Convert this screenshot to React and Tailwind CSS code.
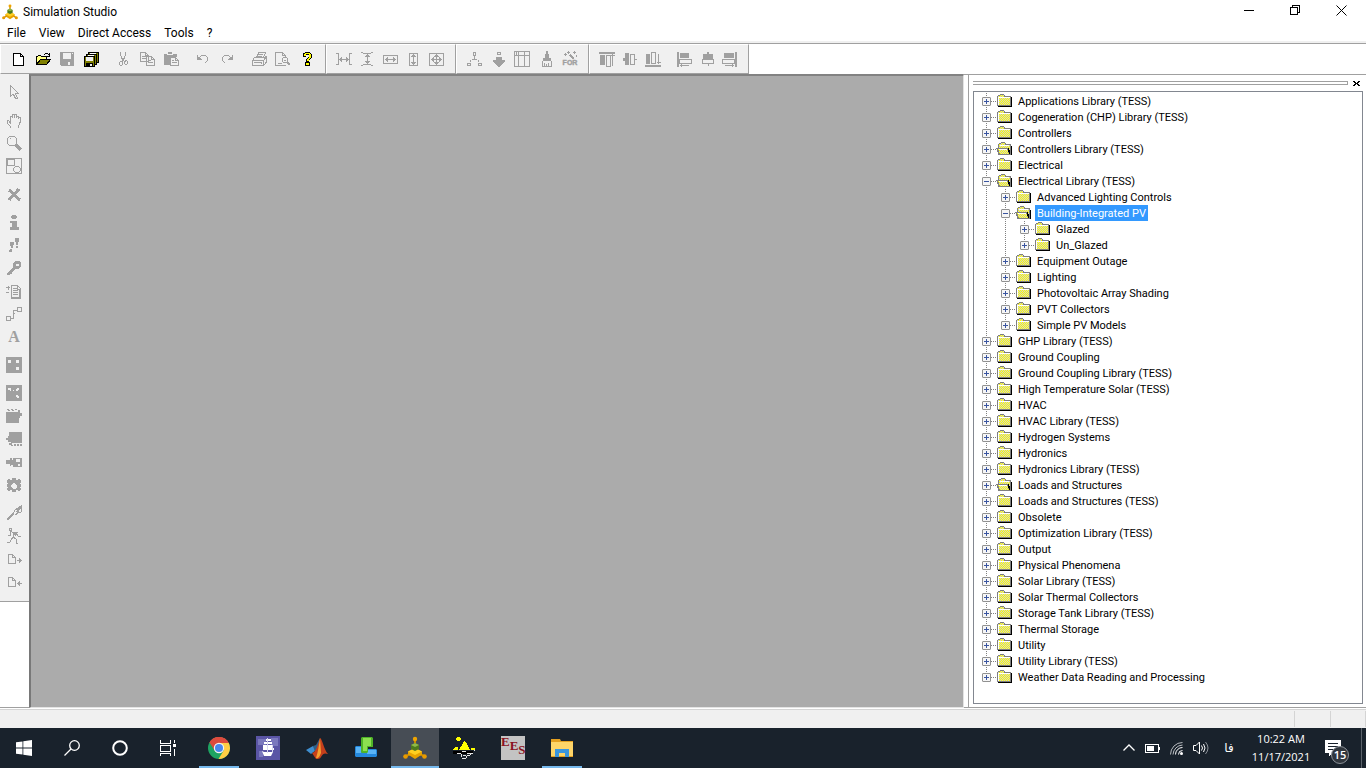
import React, { useState } from 'react';
import clsx from 'clsx';

// 16x16 pixel drawings, stroked in the current colour
const ICONS = {
  new: (
    <path d="M2.5 2.5h7l3 3v9h-10zM9.5 2.5v3h3" fill="#fff" stroke="#000" />
  ),
  open: (
    <>
      <path d="M1.5 13.5v-8h1l1-1h2l1 1h5v3" fill="#ffff80" stroke="#000" />
      <path d="M1.5 13.5l4-5h10l-4 5z" fill="#808000" stroke="#000" />
      <path d="M9 3.5h1M10 2.5h3M13 3.5h1M14.5 2v4M12 5.5h3" stroke="#000" />
    </>
  ),
  save: (
    <>
      <path d="M1 1h14v14H2l-1-1z" fill="currentColor" stroke="none" />
      <path d="M4 2h8v6H4zM9 11h2v3H9zM13 2h1v1h-1z" fill="#f0f0f0" stroke="none" />
    </>
  ),
  saveAll: (
    <>
      <path d="M5.5 1.5h10v10h-10z" fill="#808000" stroke="#000" />
      <path d="M7 2h6v3H7z" fill="#fff" stroke="none" />
      <path d="M3.5 3.5h10v10h-10z" fill="#808000" stroke="#000" />
      <path d="M5 4h6v3H5z" fill="#fff" stroke="none" />
      <path d="M1.5 5.5h10v10h-10z" fill="#808000" stroke="#000" />
      <path d="M3 6h7v4H3z" fill="#f0f0f0" stroke="none" />
      <path d="M3 12h7v4H3z" fill="#000" stroke="none" />
      <path d="M7 13h2v2H7z" fill="#f0f0f0" stroke="none" />
    </>
  ),
  cut: (
    <path d="M5.5 1v4M6.5 5v3M10.5 1v4M9.5 5v3M7.5 7v3M8.5 7v3M6 10.5h1M9 10.5h2M5 10.5h2M4.5 11v3M5 14.5h2M7.5 10v4M9.5 10v3M10 9.5h2M12.5 10v3M10 13.5h2" />
  ),
  copy: (
    <path d="M1.5 1.5h5l3 3v6h-8zM6.5 1.5v3h3M3 5.5h4M3 7.5h4M7.5 5.5h5l3 3v6h-8zM12.5 5.5v3h3M9 9.5h3M9 11.5h5" fill="#f0f0f0" />
  ),
  paste: (
    <>
      <path d="M1 3h4V1h4v2h5v3H7v8H1z" fill="currentColor" stroke="none" />
      <path d="M4 3h6v1H4z" fill="#f0f0f0" stroke="none" />
      <path d="M7.5 6.5h5l3 3v5h-8zM12.5 6.5v3h3M9 9.5h2M9 11.5h5" fill="#f0f0f0" />
    </>
  ),
  undo: <path d="M2.5 4v5M2 8.5h5M3 7.5h3M3 6.5h2M5 5.5h1M6 4.5h5M11 5.5h1M12.5 6v4M11.5 10v1M10 11.5h1" />,
  redo: <path d="M13.5 4v5M9 8.5h5M10 7.5h3M11 6.5h2M10 5.5h1M5 4.5h5M4 5.5h1M3.5 6v4M4.5 10v1M5 11.5h1" />,
  print: (
    <path d="M5.5 6.5l2-5h7l-2 5M7 3.5h5M6 5.5h5M3.5 6.5h10l2-1v6l-3 3h-11v-5zM1.5 9.5h11M12.5 9.5v5M12.5 9.5l3-4M3 11.5h8M10 12.5h1M13.5 11.5h2" />
  ),
  preview: (
    <>
      <path d="M10.5 14.5h-10v-13h7l3 3v2M7.5 1.5v3h3M3 12.5h4" />
      <path d="M8.5 6.5h3l1 1v3l-1 1h-3l-1-1v-3zM9 9.5h2" />
      <path d="M12 11l3 3" strokeWidth="2" />
    </>
  ),
  help: (
    <>
      <path d="M4 2h2V1h5v1h1v1h1v4h-1v1h-1v1h-1v2H7V8h1V7h1V6h1V4H7v2H4zM6 11h5v4H6z" fill="#000" stroke="none" />
      <path d="M5 3h1V2h5v1h1v4h-1v1h-1v2H8V8h1V7h1V3H7v2H5zM7 12h3v2H7z" fill="#ff0" stroke="none" />
    </>
  ),
  spaceH: <path d="M0 2.5h2M2.5 2v12M0 13.5h2M16 2.5h-2M13.5 2v12M16 13.5h-2M3 8.5h10M5.5 6v5M4.5 7v3M10.5 6v5M11.5 7v3" />,
  spaceV: <path d="M2 1.5h2M4 2.5h8M12 1.5h2M2 14.5h2M4 13.5h8M12 14.5h2M8.5 3v10M6 5.5h5M7 4.5h3M6 10.5h5M7 11.5h3" />,
  sizeH: <path d="M1.5 4.5h14v8h-14zM3 8.5h11M5.5 6v5M4.5 7v3M11.5 6v5M12.5 7v3" />,
  sizeV: <path d="M4.5 2.5h8v12h-8zM8.5 3v11M6 5.5h5M7 4.5h3M6 11.5h5M7 12.5h3" />,
  sizeBoth: <path d="M1.5 2.5h14v12h-14zM3 8.5h11M8.5 3v11M5.5 6v5M4.5 7v3M11.5 6v5M12.5 7v3M6 5.5h5M7 4.5h3M6 11.5h5M7 12.5h3" />,
  tree: <path d="M7.5 1.5h2v3h-2zM8.5 5v3M6 8.5h5M4.5 9v2M12.5 9v2M1.5 12.5h3v2h-3zM12.5 12.5h3v2h-3z" />,
  down: (
    <>
      <path d="M7.5 1.5h3v2h-3z" />
      <path d="M6 6h6v3h3v2l-6 5-6-5V9h3z" fill="currentColor" stroke="none" />
    </>
  ),
  grid: <path d="M.5.5h15v15H.5zM4.5 0v16M0 4.5h16M10.5 0v16M2.5 0v4" />,
  brush: (
    <>
      <path d="M8 0h2v3h1v4h2v3H5V7h2V3h1z" fill="currentColor" stroke="none" />
      <path d="M4.5 10v5.5h9V10M6.5 12v3M8.5 13v2M10.5 12v3" />
    </>
  ),
  fortran: (
    <>
      <path d="M3.5 2v3M2 3.5h3M6.5 0v3M5 1.5h3M12.5 0v3M11 1.5h3M14.5 4v2" />
      <path d="M8 4l4 4" strokeWidth="2" />
      <text
        x="8"
        y="14"
        textAnchor="middle"
        className="font-['Liberation_Sans',sans-serif] text-[7px] font-bold"
        fill="currentColor"
        stroke="currentColor"
        strokeWidth=".4"
      >
        FOR
      </text>
    </>
  ),
  alignTop: (
    <>
      <path d="M0 1h16v2H0zM1 4h5v10H1z" fill="currentColor" stroke="none" />
      <path d="M7.5 4.5h4v11h-4zM13.5 3v12M12 4.5h4" />
    </>
  ),
  alignMid: (
    <>
      <path d="M3 2h4v12H3zM1 7h3v3H1z" fill="currentColor" stroke="none" />
      <path d="M8.5 3.5h4v10h-4zM12 8.5h3" />
    </>
  ),
  alignBottom: (
    <>
      <path d="M1 3h4v10H1zM0 14h16v2H0z" fill="currentColor" stroke="none" />
      <path d="M6.5 1.5h4v11h-4zM13.5 3v10M12 11.5h4" />
    </>
  ),
  alignLeft: (
    <>
      <path d="M1 1h2v15H1zM4 2h9v5H4z" fill="currentColor" stroke="none" />
      <path d="M3.5 8.5h12v4h-12zM4 14.5h9M5.5 13v3" />
    </>
  ),
  alignCenter: (
    <>
      <path d="M8 1h2v2h4v5H4V3h4z" fill="currentColor" stroke="none" />
      <path d="M3.5 8.5h11v4h-11zM9 13v2" />
    </>
  ),
  alignRight: (
    <>
      <path d="M13 1h2v15h-2zM2 2h10v5H2z" fill="currentColor" stroke="none" />
      <path d="M.5 8.5h12v4H.5zM3 14.5h9M10.5 13v3" />
    </>
  ),
  pointer: <path d="M4.5 1.5v11l2-2h1l2 4h2l-2-5h3z" />,
  hand: <path d="M5 15.5l-4-5v-2h1.5l1.5 2v-5l1-1 1.5 1v-3h2v3-3.5h2v4-2h2v3-1.5h1.5v5l-2 5" />,
  zoom: (
    <>
      <path d="M3.5 1.5h5l2 2v5l-2 2h-5l-2-2v-5zM3.5 4.5l1-1" />
      <path d="M10 10l5 5" strokeWidth="3" />
    </>
  ),
  zone: <path d="M.5.5h15v15H.5zM1.5 1.5h7v6h-7zM9.5 8.5h3l2 2v2l-2 2h-3l-2-2v-2z" />,
  del: <path d="M3 4l11 10M13 3L3 14" strokeWidth="3" />,
  info: <path d="M6 1h4v1h1v2h-1v1H6V4H5V2h1zM4 7h7v6h2v3H4v-3h2V9H4z" fill="currentColor" stroke="none" />,
  steps: (
    <path d="M4 5h4v3H7v3H5V9H4zM4 12h2v3H3v-2zM9 1h4v4h-1v3h-2V5H9zM10 9h2v2h-2z" fill="currentColor" stroke="none" />
  ),
  key: (
    <>
      <path d="M9 1h5v1h1v5h-1v1h-1v1H9L3 15H1v-2l6-6V3h1V2h1zM10 4v2h3V4z" fill="currentColor" fillRule="evenodd" stroke="none" />
      <path d="M4 12l2 2" strokeWidth="2" />
    </>
  ),
  notes: (
    <>
      <path d="M2.5 3v4M0 4.5h4M0 9.5h3M5.5 2.5h6l3 3v9h-9zM7 5.5h4M7 7.5h5M7 9.5h5M7 11.5h5M11.5 3v3h3" />
      <path d="M14 6v9H5" strokeWidth="2" />
    </>
  ),
  link: <path d="M11.5 1.5h4v4h-4zM.5 10.5h4v4h-4zM5 12.5h2.5v-8H11M6.5 7.5h2" />,
  text: (
    <text
      x="8"
      y="13"
      textAnchor="middle"
      className="font-['Liberation_Serif',serif] text-[16px] font-bold"
      fill="currentColor"
      stroke="none"
    >
      A
    </text>
  ),
  block4: (
    <>
      <path d="M0 0h16v16H0z" fill="currentColor" stroke="none" />
      <path d="M2 3h3v3H2zM10 3h3v3h-3zM10 10h3v3h-3z" fill="#f0f0f0" stroke="none" />
    </>
  ),
  block3: (
    <>
      <path d="M0 0h16v16H0z" fill="currentColor" stroke="none" />
      <path d="M2 3h3v3H4V5H2zM7 5h1v1H7zM10 4h1V3h2v2h-1v1h-2zM10 10h2v1h1v2h-2v-1h-1z" fill="#f0f0f0" stroke="none" />
    </>
  ),
  front: (
    <path d="M1 1h2v1H1zM5 1h2v1H5zM9 1h2v1H9zM12 2h2v3h2v3h-2v2h-1v5H0V4h12zM2 2h2v1H2zM6 2h2v1H6z" fill="currentColor" stroke="none" />
  ),
  back: (
    <path d="M3 1h13v11H5v-1H2V9H0V7h2V5h1zM3 12h3v2H3zM8 13h2v2H8zM11 13h2v2h-2zM14 13h2v2h-2zM5 14h2v1H5z" fill="currentColor" stroke="none" />
  ),
  toDisk: (
    <>
      <path d="M0 6h4V4h2v2h1V4h9v9H7v-2H5v1H4v-2H0z" fill="currentColor" stroke="none" />
      <path d="M10 5h4v3h-4zM12 10h2v2h-2z" fill="#f0f0f0" stroke="none" />
    </>
  ),
  gear: (
    <path d="M6 1h4v2h2V2h2v1h1v3h-1v1h1v3h-1v1h1v2h-1v1h-2v-1h-2v2H6v-2H4v1H2v-1H1v-2h1v-1H1V7h1V6H1V3h1V2h2v1h2zM7 6v1H6v1H5v2h1v1h1v1h3v-1h1V8h-1V7H9V6z" fill="currentColor" fillRule="evenodd" stroke="none" />
  ),
  pen: (
    <>
      <path d="M1 15l6-6" strokeWidth="2" />
      <path d="M7 9l2-4 6-4v6l-3 1-3 2M15 1l-5 6M15 2l-3 5M11 4v5" />
    </>
  ),
  run: <path d="M3 0h2v2H3zM4 3l4 2 4-1M8 5l-1 4 3 2v4h2M7 9l-3 5H1M9 4l3 4h3M4 3v4H2M8 5l2 3" />,
  pageOut: <path d="M2.5 3.5h4l3 3v6h-7zM6.5 3.5v3h3M11 9.5h5M13.5 7v5M14.5 8v3" />,
  pageIn: <path d="M2.5 3.5h4l3 3v6h-7zM6.5 3.5v3h3M11 9.5h5M13.5 7v5M12.5 8v3" />,
};

const TOOLBARS = [
  {
    pad: 'pl-[6px] pr-[6px]',
    cell: 'w-6',
    groups: [['new', 'open', 'save', 'saveAll'], ['cut', 'copy', 'paste'], ['undo', 'redo'], ['print', 'preview', 'help']],
  },
  { pad: 'pl-[5px] pr-[8px]', cell: 'w-[23px]', groups: [['spaceH', 'spaceV', 'sizeH', 'sizeV', 'sizeBoth']] },
  { pad: 'pl-[5px] pr-[6px]', cell: 'w-6', groups: [['tree', 'down', 'grid', 'brush', 'fortran']] },
  {
    pad: 'pl-[5px] pr-[7px]',
    cell: 'w-[23px]',
    groups: [['alignTop', 'alignMid', 'alignBottom'], ['alignLeft', 'alignCenter', 'alignRight']],
  },
];

const PALETTE = [
  ['pointer'],
  ['hand', 'zoom', 'zone'],
  ['del'],
  ['info', 'steps', 'key', 'notes', 'link', 'text'],
  ['block4'],
  ['block3', 'front', 'back', 'toDisk', 'gear'],
  ['pen', 'run', 'pageOut', 'pageIn'],
];

const LIBRARY = [
  { name: 'Applications Library (TESS)' },
  { name: 'Cogeneration (CHP) Library (TESS)' },
  { name: 'Controllers' },
  { name: 'Controllers Library (TESS)', openIcon: true },
  { name: 'Electrical' },
  {
    name: 'Electrical Library (TESS)',
    openIcon: true,
    children: [
      { name: 'Advanced Lighting Controls' },
      { name: 'Building-Integrated PV', openIcon: true, children: [{ name: 'Glazed' }, { name: 'Un_Glazed' }] },
      { name: 'Equipment Outage' },
      { name: 'Lighting' },
      { name: 'Photovoltaic Array Shading' },
      { name: 'PVT Collectors' },
      { name: 'Simple PV Models' },
    ],
  },
  { name: 'GHP Library (TESS)' },
  { name: 'Ground Coupling' },
  { name: 'Ground Coupling Library (TESS)' },
  { name: 'High Temperature Solar (TESS)' },
  { name: 'HVAC' },
  { name: 'HVAC Library (TESS)' },
  { name: 'Hydrogen Systems' },
  { name: 'Hydronics' },
  { name: 'Hydronics Library (TESS)' },
  { name: 'Loads and Structures', openIcon: true },
  { name: 'Loads and Structures (TESS)' },
  { name: 'Obsolete' },
  { name: 'Optimization Library (TESS)' },
  { name: 'Output' },
  { name: 'Physical Phenomena' },
  { name: 'Solar Library (TESS)' },
  { name: 'Solar Thermal Collectors' },
  { name: 'Storage Tank Library (TESS)' },
  { name: 'Thermal Storage' },
  { name: 'Utility' },
  { name: 'Utility Library (TESS)' },
  { name: 'Weather Data Reading and Processing' },
];

const Glyph = ({ name }) => (
  <svg className="w-4 h-4" viewBox="0 0 16 16" fill="none" stroke="currentColor" shapeRendering="crispEdges">
    {ICONS[name]}
  </svg>
);

const TrnsysLogo = ({ className }) => (
  <svg className={className} viewBox="0 0 24 24">
    <path d="M12 3v5M12 16l-9 4M12 16l9 4" stroke="#c88a00" strokeWidth="2" />
    <circle cx="12" cy="3" r="2.2" fill="#f0a400" />
    <circle cx="2.5" cy="20.5" r="2.3" fill="#e89a00" />
    <circle cx="21.5" cy="20.5" r="2.3" fill="#e89a00" />
    <path d="M12 12l7 3.5v3L12 23l-7-4.5v-3z" fill="#e8a200" />
    <path d="M12 12l7 3.5-7 3.5-7-3.5z" fill="#ffcf20" />
    <path d="M8 9l4-2 4 2v4l-4 2-4-2z" fill="#4d7a1c" />
    <path d="M8 9l4-2 4 2-4 2z" fill="#8fb848" />
  </svg>
);

const Folder = ({ open }) => (
  <svg className="w-4 h-4 shrink-0" viewBox="0 0 16 16" shapeRendering="crispEdges">
    <defs>
      <pattern id="dither" width="2" height="2" patternUnits="userSpaceOnUse">
        <path d="M0 0h2v2H0z" fill="#d0d0d0" />
        <path d="M0 0h1v1H0zM1 1h1v1H1z" fill="#ff0" />
      </pattern>
    </defs>
    {open ? (
      <>
        <path d="M3 14h13V5h-1v9z" fill="#000" />
        <path d="M2.5 8V3.5l1-1h1l1-1h3l1 1v1h5v10h-1L11 7.5H1l2 6h10" fill="url(#dither)" stroke="#808080" />
        <path d="M1.5 7.5h10l2 5.5h-10z" fill="url(#dither)" stroke="#808080" />
        <path d="M4 4.5h9M3 8.5h8" stroke="#fff" />
        <path d="M12 7h1v2h1v4h-1v-2h-1z" fill="#000" />
      </>
    ) : (
      <>
        <path d="M2 13h13V4h1v10H2z" fill="#000" />
        <path d="M1.5 12.5v-9l1-1h1l1-1h3l1 1v1h6v9z" fill="url(#dither)" stroke="#808080" />
        <path d="M2.5 12V4.5H14" fill="none" stroke="#fff" />
      </>
    )}
  </svg>
);

// One 19px column of the dotted tree lines
const Gutter = ({ line, half, stub, children }) => (
  <span className="relative w-[19px] h-4 shrink-0 flex items-center justify-center">
    <svg className="absolute inset-0 w-[19px] h-4" viewBox="0 0 19 16" stroke="#808080" strokeDasharray="1 1" shapeRendering="crispEdges">
      {line && <path d={half ? 'M9.5 0v8' : 'M9.5 0v16'} />}
      {stub && <path d="M10 8.5h9" />}
    </svg>
    {children}
  </span>
);

const TreeNode = ({ node, trail, isLast, openNodes, toggle, selected, select }) => {
  const isOpen = openNodes.includes(node.name);
  return (
    <li role="treeitem" aria-expanded={isOpen} aria-selected={selected === node.name}>
      <div className="flex h-4 items-center">
        {trail.map((line, i) => (
          <Gutter key={i} line={line} />
        ))}
        <Gutter line half={isLast} stub>
          <button
            onClick={() => toggle(node.name)}
            aria-label={`Toggle ${node.name}`}
            className="relative w-[9px] h-[9px] rounded-[1px] border border-[#919191] bg-[#f6f6f6] flex items-center justify-center"
          >
            <svg className="w-[7px] h-[7px] shrink-0" viewBox="0 0 7 7" stroke="#3a55a0" shapeRendering="crispEdges">
              <path d={isOpen ? 'M1 3.5h5' : 'M1 3.5h5M3.5 1v5'} />
            </svg>
          </button>
        </Gutter>
        <Folder open={node.openIcon} />
        <button
          onClick={() => select(node.name)}
          className={clsx(
            'ml-1 h-4 px-0.5 pt-0.5 text-[11px] leading-[14px] whitespace-nowrap',
            selected === node.name ? 'bg-[#3399ff] text-white' : 'text-black'
          )}
        >
          {node.name}
        </button>
      </div>
      {isOpen && node.children && (
        <ul role="group">
          {node.children.map((child, i) => (
            <TreeNode
              key={child.name}
              node={child}
              trail={[...trail, !isLast]}
              isLast={i === node.children.length - 1}
              openNodes={openNodes}
              toggle={toggle}
              selected={selected}
              select={select}
            />
          ))}
        </ul>
      )}
    </li>
  );
};

const LibraryPanel = () => {
  const [openNodes, setOpenNodes] = useState(['Electrical Library (TESS)', 'Building-Integrated PV']);
  const [selected, setSelected] = useState('Building-Integrated PV');

  const toggle = (name) => {
    setOpenNodes(openNodes.includes(name) ? openNodes.filter((n) => n !== name) : [...openNodes, name]);
  };

  return (
    <aside className="w-[402px] shrink-0 flex pl-1 border-t border-b border-[#a0a0a0] bg-white">
      <div className="flex-1 flex flex-col border-l border-[#a0a0a0] pl-1 pr-[3px] pb-[3px]">
        <div className="flex items-center h-4 pr-[2px]">
          <div className="flex-1 h-1 mr-1 border border-l-0 border-[#a0a0a0]" />
          <button aria-label="Close panel" className="w-[9px] h-[9px]">
            <svg className="w-[9px] h-[9px]" viewBox="0 0 9 9" fill="#000" shapeRendering="crispEdges">
              <path d="M1 2h2v1h1v1h1V3h1V2h2v1H7v1H6v1h1v1h1v1H6V6H5V5H4v1H3v1H1V6h1V5h1V4H2V3H1z" />
            </svg>
          </button>
        </div>
        <ul
          role="tree"
          aria-label="Component library"
          className="flex-1 min-h-0 overflow-hidden border border-[#828790] pl-[3px] pt-px font-[Roboto,'Liberation_Sans',sans-serif]"
        >
          {LIBRARY.map((node, i) => (
            <TreeNode
              key={node.name}
              node={node}
              trail={[]}
              isLast={i === LIBRARY.length - 1}
              openNodes={openNodes}
              toggle={toggle}
              selected={selected}
              select={setSelected}
            />
          ))}
        </ul>
      </div>
    </aside>
  );
};

const TASKS = [
  {
    name: 'Chrome',
    running: true,
    icon: (
      <svg className="w-6 h-6" viewBox="0 0 24 24">
        <circle cx="12" cy="12" r="11" fill="#1ea362" />
        <path d="M12 12L2.5 6.5A11 11 0 0 1 21.5 6.5z" fill="#dd4b3e" />
        <path d="M12 7h9.8A11 11 0 0 1 11.5 23L17 14z" fill="#ffce44" />
        <path d="M2.5 6.5L8 15l4-8h9.8A11 11 0 0 0 2.5 6.5z" fill="#dd4b3e" />
        <circle cx="12" cy="12" r="5.2" fill="#f4f4f4" />
        <circle cx="12" cy="12" r="4" fill="#4a87ee" />
      </svg>
    ),
  },
  {
    name: 'Ship',
    icon: (
      <svg className="w-6 h-6" viewBox="0 0 24 24">
        <path d="M0 0h24v24H0z" fill="#5a55a5" />
        <path d="M2 3h8v6H2zM15 2h7v8h-7zM3 15h4v6H3z" fill="#7a78bd" />
        <path d="M10 3h5v2h-5zM8 6h3v2H8zM12 6h4v2h-4zM7 9h4v5H7zM12 9h4v5h-4zM17 12h1v2h-1zM6 15l2 1h9l-2 4H8z" fill="#fff" />
        <path d="M11.5 2v15M16.5 9v7" stroke="#d8d8f0" />
      </svg>
    ),
  },
  {
    name: 'MATLAB',
    icon: (
      <svg className="w-6 h-6" viewBox="0 0 24 24">
        <path d="M1 14l7-4 3 4-5 4z" fill="#3f8fd0" />
        <path d="M8 10l3-1 4-7-2 12-3 2z" fill="#2f5f86" />
        <path d="M15 2c2 0 4 12 8 16-3-1-5-1-7 3-1 2-3 2-5 2L7 17c4 0 6-9 8-15z" fill="#c5401c" />
        <path d="M15 2c-1 7-2 14-4 20 3 1 4-3 5-5z" fill="#f4a030" />
      </svg>
    ),
  },
  {
    name: 'Blocks',
    icon: (
      <svg className="w-6 h-6" viewBox="0 0 24 24">
        <path d="M2 10h6v6h6v-3h8l1 1v6l-1 1H2l-1-1v-9z" fill="#2488dc" />
        <path d="M2 11h5v6H2zM13 14h9v4h-9z" fill="#5ab4f6" />
        <path d="M8 1h10l1 1v9h-5v5l-1 1H8l-1-1V2z" fill="#4fb428" />
        <path d="M9 2h8v8h-4v5H9z" fill="#8de050" />
      </svg>
    ),
  },
  { name: 'Simulation Studio', running: true, active: true, icon: <TrnsysLogo className="w-6 h-6" /> },
  {
    name: 'Solar',
    icon: (
      <svg className="w-6 h-6" viewBox="0 0 24 24" shapeRendering="crispEdges">
        <path d="M5 1h3v4H5zM4 2h5v2H4zM12 5h1l1 2 1 1 2 4 1 2H7l1-2 2-3 1-2zM1 13l2-2h2l1 1v2H1zM19 12h3l1 1v1h-4z" fill="#ff0" />
        <path d="M1 15h20v3H1z" fill="#000" />
        <path d="M5 17.5h4M10 15.5h4M15 17.5h6M22.5 14v1M9.5 18v3M11 19.5h3M14.5 20v2M10 22.5h4M15 19.5h3M18.5 17v2" fill="none" stroke="#e8e8e8" />
      </svg>
    ),
  },
  {
    name: 'EES',
    icon: (
      <span className="w-6 h-6 bg-[#c3c3c3] text-[#8a1020] font-bold font-['Liberation_Serif',serif] flex text-[13px] leading-3">
        <span>E</span>
        <span className="pt-1">E</span>
        <span className="pt-2">S</span>
      </span>
    ),
  },
  {
    name: 'File Explorer',
    running: true,
    icon: (
      <svg className="w-6 h-6" viewBox="0 0 24 24">
        <path d="M1 3h9l1 2h12v16H1z" fill="#e5a020" />
        <path d="M1 6h22v14H1z" fill="#ffd568" />
        <path d="M5 21v-8h14v8h-4v-4H9v4z" fill="#3b96dd" />
      </svg>
    ),
  },
];

const Taskbar = () => (
  <footer className="h-10 shrink-0 flex items-center bg-[#19222c] text-white">
    <button aria-label="Start" className="w-12 h-10 flex items-center justify-center">
      <svg className="w-4 h-4" viewBox="0 0 16 16" fill="#fff">
        <path d="M0 2.3L6.5 1.4v6.2H0zM7.3 1.3L16 0v7.6H7.3zM0 8.4h6.5v6.2L0 13.7zM7.3 8.4H16V16l-8.7-1.3z" />
      </svg>
    </button>
    <button aria-label="Search" className="w-12 h-10 flex items-center justify-center">
      <svg className="w-4 h-4" viewBox="0 0 16 16" fill="none" stroke="#fff" strokeWidth="1.3">
        <circle cx="10.5" cy="5.5" r="4.8" />
        <path d="M7 9L.5 15.5" />
      </svg>
    </button>
    <button aria-label="Cortana" className="w-12 h-10 flex items-center justify-center">
      <svg className="w-4 h-4" viewBox="0 0 16 16" fill="none" stroke="#fff" strokeWidth="2">
        <circle cx="8" cy="8" r="6.8" />
      </svg>
    </button>
    <button aria-label="Task View" className="w-12 h-10 flex items-center justify-center">
      <svg className="w-4 h-4" viewBox="0 0 16 16" fill="none" stroke="#fff" shapeRendering="crispEdges">
        <path d="M.5 0v3.5h10V0M.5 5.5h10v6H.5zM.5 16v-2.5h10V16M14.5 0v3M14.5 9v7" />
        <path d="M13 4h3v3h-3z" fill="#fff" stroke="none" />
      </svg>
    </button>
    <nav aria-label="Tasks" className="flex gap-px ml-[3px]">
      {TASKS.map((task) => (
        <button
          key={task.name}
          aria-label={task.name}
          className={clsx('w-12 h-10 flex flex-col items-center', task.active && 'bg-[#474d55]')}
        >
          <span className="h-[38px] flex items-center pt-0.5">{task.icon}</span>
          {task.running && <span className={clsx('h-0.5 bg-[#76b9ed]', task.active ? 'w-12' : 'w-10')} />}
        </button>
      ))}
    </nav>
    <div className="ml-auto flex items-center h-10 font-['Open_Sans',sans-serif] text-[11px]">
      <button aria-label="Show hidden icons" className="w-6 flex justify-center">
        <svg className="w-3 h-3" viewBox="0 0 12 12" fill="none" stroke="#fff" strokeWidth="1.3">
          <path d="M.5 8.5L6 3l5.5 5.5" />
        </svg>
      </button>
      <svg className="w-4 h-4 ml-1" viewBox="0 0 16 16" fill="none" stroke="#fff" shapeRendering="crispEdges">
        <path d="M.5 4.5h13v8H.5zM14.5 7v3" />
        <path d="M2 6h7v5H2z" fill="#fff" stroke="none" />
      </svg>
      <svg className="w-4 h-4 ml-2" viewBox="0 0 16 16" fill="none" stroke="#fff">
        <path d="M9.5 14.5a4 4 0 0 1 4-4M6.5 14.5a7 7 0 0 1 7-7" />
        <path d="M4 14.5A10 10 0 0 1 13.5 5M1.5 14.5A12 12 0 0 1 13.5 2.5" stroke="#b8bcc0" />
        <circle cx="12.5" cy="13.5" r="1.5" fill="#fff" stroke="none" />
      </svg>
      <svg className="w-4 h-4 ml-2" viewBox="0 0 16 16" fill="none" stroke="#fff">
        <path d="M.5 5.5H3L6.5 2v12L3 10.5H.5zM8.5 5.5q2 2.5 0 5M10.5 4q3 4 0 8" />
        <path d="M12.5 2q5 6 0 12" stroke="#8b9198" />
      </svg>
      <button lang="fa" className="ml-2 w-6 text-[12px] font-['DejaVu_Sans',sans-serif]">فا</button>
      <div className="ml-1 w-[72px] text-center leading-[18px]">
        <p>10:22 AM</p>
        <p>11/17/2021</p>
      </div>
      <button aria-label="Notifications" className="relative ml-2 w-9 h-10">
        <svg className="absolute left-0 top-3 w-4 h-4" viewBox="0 0 16 16" shapeRendering="crispEdges">
          <path d="M0 0h16v13H7l-3 3v-3H0z" fill="#fff" />
          <path d="M3 3.5h10M3 6.5h10M3 9.5h7" stroke="#19222c" />
        </svg>
        <span className="absolute left-1.5 top-[18px] w-[18px] h-[18px] rounded-full border border-[#8b9198] bg-[#30363d] text-[11px] leading-4 font-semibold text-center">
          15
        </span>
      </button>
      <div className="h-10 w-[5px] border-l border-[#5b626a]" />
    </div>
  </footer>
);

export default function App() {
  return (
    <div className="h-screen flex flex-col overflow-hidden bg-white text-black font-[Roboto,'Open_Sans',sans-serif]">
      {/* Title bar */}
      <header className="h-6 shrink-0 flex items-center pl-[2px] pr-[2px] text-[12px]">
        <TrnsysLogo className="w-4 h-4" />
        <h1 className="ml-[5px]">Simulation Studio</h1>
        <div className="ml-auto self-start flex">
          <button aria-label="Minimize" className="w-[46px] h-5 flex items-center justify-center">
            <svg className="w-[11px] h-[11px]" viewBox="0 0 11 11" stroke="#000" shapeRendering="crispEdges">
              <path d="M0 5.5h10" />
            </svg>
          </button>
          <button aria-label="Restore" className="w-[46px] h-5 flex items-center justify-center">
            <svg className="w-[11px] h-[11px]" viewBox="0 0 11 11" fill="none" stroke="#000" shapeRendering="crispEdges">
              <path d="M.5 2.5h7v7h-7zM2.5 2V.5h7v7H8" />
            </svg>
          </button>
          <button aria-label="Close" className="w-[46px] h-5 flex items-center justify-center">
            <svg className="w-[11px] h-[11px]" viewBox="0 0 11 11" stroke="#000">
              <path d="M.5.5l10 10M10.5.5l-10 10" />
            </svg>
          </button>
        </div>
      </header>

      {/* Menu */}
      <nav className="h-[17px] shrink-0 flex items-end pl-[7px] gap-[13px] text-[12px] leading-4">
        {['File', 'View', 'Direct Access', 'Tools', '?'].map((item) => (
          <button key={item}>{item}</button>
        ))}
      </nav>

      {/* Toolbars */}
      <div className="h-[33px] shrink-0 flex border-t-2 border-[#f0f0f0]">
        <div className="flex-1 flex border-t border-[#a0a0a0]">
          {TOOLBARS.map((bar, b) => (
            <div
              key={b}
              role="toolbar"
              className={clsx(
                'flex items-center border border-t-white border-l-white border-r-[#a0a0a0] border-b-[#a0a0a0] bg-[#f0f0f0] text-[#a0a0a0]',
                bar.pad
              )}
            >
              {bar.groups.map((group, g) => (
                <div key={g} className={clsx('flex', g > 0 && 'ml-2')}>
                  {group.map((icon) => (
                    <button key={icon} aria-label={icon} className={clsx('h-6 flex items-center justify-center', bar.cell)}>
                      <Glyph name={icon} />
                    </button>
                  ))}
                </div>
              ))}
            </div>
          ))}
        </div>
      </div>

      <main className="flex-1 min-h-0 flex">
        {/* Drawing tools */}
        <div className="w-[29px] shrink-0 border-b border-[#a0a0a0]">
          <div
            role="toolbar"
            aria-label="Drawing tools"
            className="flex flex-col gap-[5px] pl-[2px] pt-[6px] pb-[8px] bg-[#f0f0f0] border-b border-[#a0a0a0] text-[#a0a0a0]"
          >
            {PALETTE.map((group, g) => (
              <div key={g} className="flex flex-col items-start">
                {group.map((icon) => (
                  <button key={icon} aria-label={icon} className="w-6 h-[23px] flex items-center justify-center">
                    <Glyph name={icon} />
                  </button>
                ))}
              </div>
            ))}
          </div>
        </div>
        <section
          aria-label="Workspace"
          className="flex-1 border-t-2 border-l-2 border-r border-b border-t-[#828282] border-l-[#787878] border-r-[#e3e3e3] border-b-[#e3e3e3] bg-[#ababab]"
        />
        <LibraryPanel />
      </main>

      {/* Status bar */}
      <div className="h-[19px] shrink-0 mt-px flex justify-end border-t border-[#d4d4d4] bg-[#f0f0f0] py-px">
        <div className="w-9 border-l border-[#d4d4d4]" />
        <div className="w-9 border-l border-r border-[#d4d4d4]" />
      </div>

      <Taskbar />
    </div>
  );
}
